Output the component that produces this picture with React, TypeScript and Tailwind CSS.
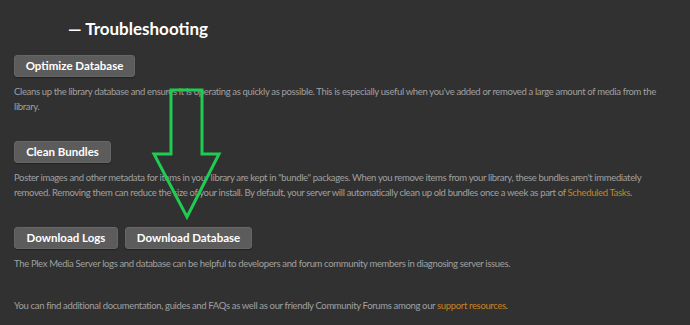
export default function App() {
  const body =
    "text-[9.5px] leading-[15px] tracking-[-0.35px] text-[#a0a0a0] font-['Lato',sans-serif] whitespace-nowrap";
  const btn =
    "h-[22px] rounded-[3px] bg-[#5c5c5c] border border-[#666] text-center whitespace-nowrap text-[11.5px] font-bold text-white font-['Lato',sans-serif] shadow-[0_1px_1px_rgba(0,0,0,0.3)]";

  return (
    <div className="relative w-[690px] h-[325px] overflow-hidden bg-[#313131]">
      <div className="flex flex-col pl-[14px] pt-[19px]">
        <h2 className="ml-[54px] text-[17px] leading-[20px] font-bold text-white font-['Lato',sans-serif]">
          — Troubleshooting
        </h2>

        <div className="mt-[16px] flex">
          <button className={`${btn} w-[121px]`}>Optimize Database</button>
        </div>
        <p className={`${body} mt-[7px]`}>
          Cleans up the library database and ensures it is operating as quickly as possible. This is especially useful when you've added or removed a large amount of media from the
          <br />
          library.
        </p>

        <div className="mt-[27px] flex">
          <button className={`${btn} w-[97px]`}>Clean Bundles</button>
        </div>
        <p className={`${body} mt-[7px]`}>
          Poster images and other metadata for items in your library are kept in "bundle" packages. When you remove items from your library, these bundles aren't immediately
          <br />
          removed. Removing them can reduce the size of your install. By default, your server will automatically clean up old bundles once a week as part of{" "}
          <span className="text-[#c98322]">Scheduled Tasks</span>.
        </p>

        <div className="mt-[27px] flex gap-[7px]">
          <button className={`${btn} w-[104px]`}>Download Logs</button>
          <button className={`${btn} w-[127px]`}>Download Database</button>
        </div>
        <p className={`${body} mt-[7px]`}>
          The Plex Media Server logs and database can be helpful to developers and forum community members in diagnosing server issues.
        </p>

        <p className={`${body} mt-[27px]`}>
          You can find additional documentation, guides and FAQs as well as our friendly Community Forums among our{" "}
          <span className="text-[#c98322]">support resources</span>.
        </p>
      </div>

      {/* hand-drawn annotation arrow */}
      <svg className="absolute inset-0 pointer-events-none" width="690" height="325">
        <polygon
          points="171,90 202,90 202,154 219,154 187,217 154,154 171,154"
          fill="none"
          stroke="#1fcc52"
          strokeWidth="3"
          strokeLinejoin="miter"
        />
      </svg>
    </div>
  );
}
